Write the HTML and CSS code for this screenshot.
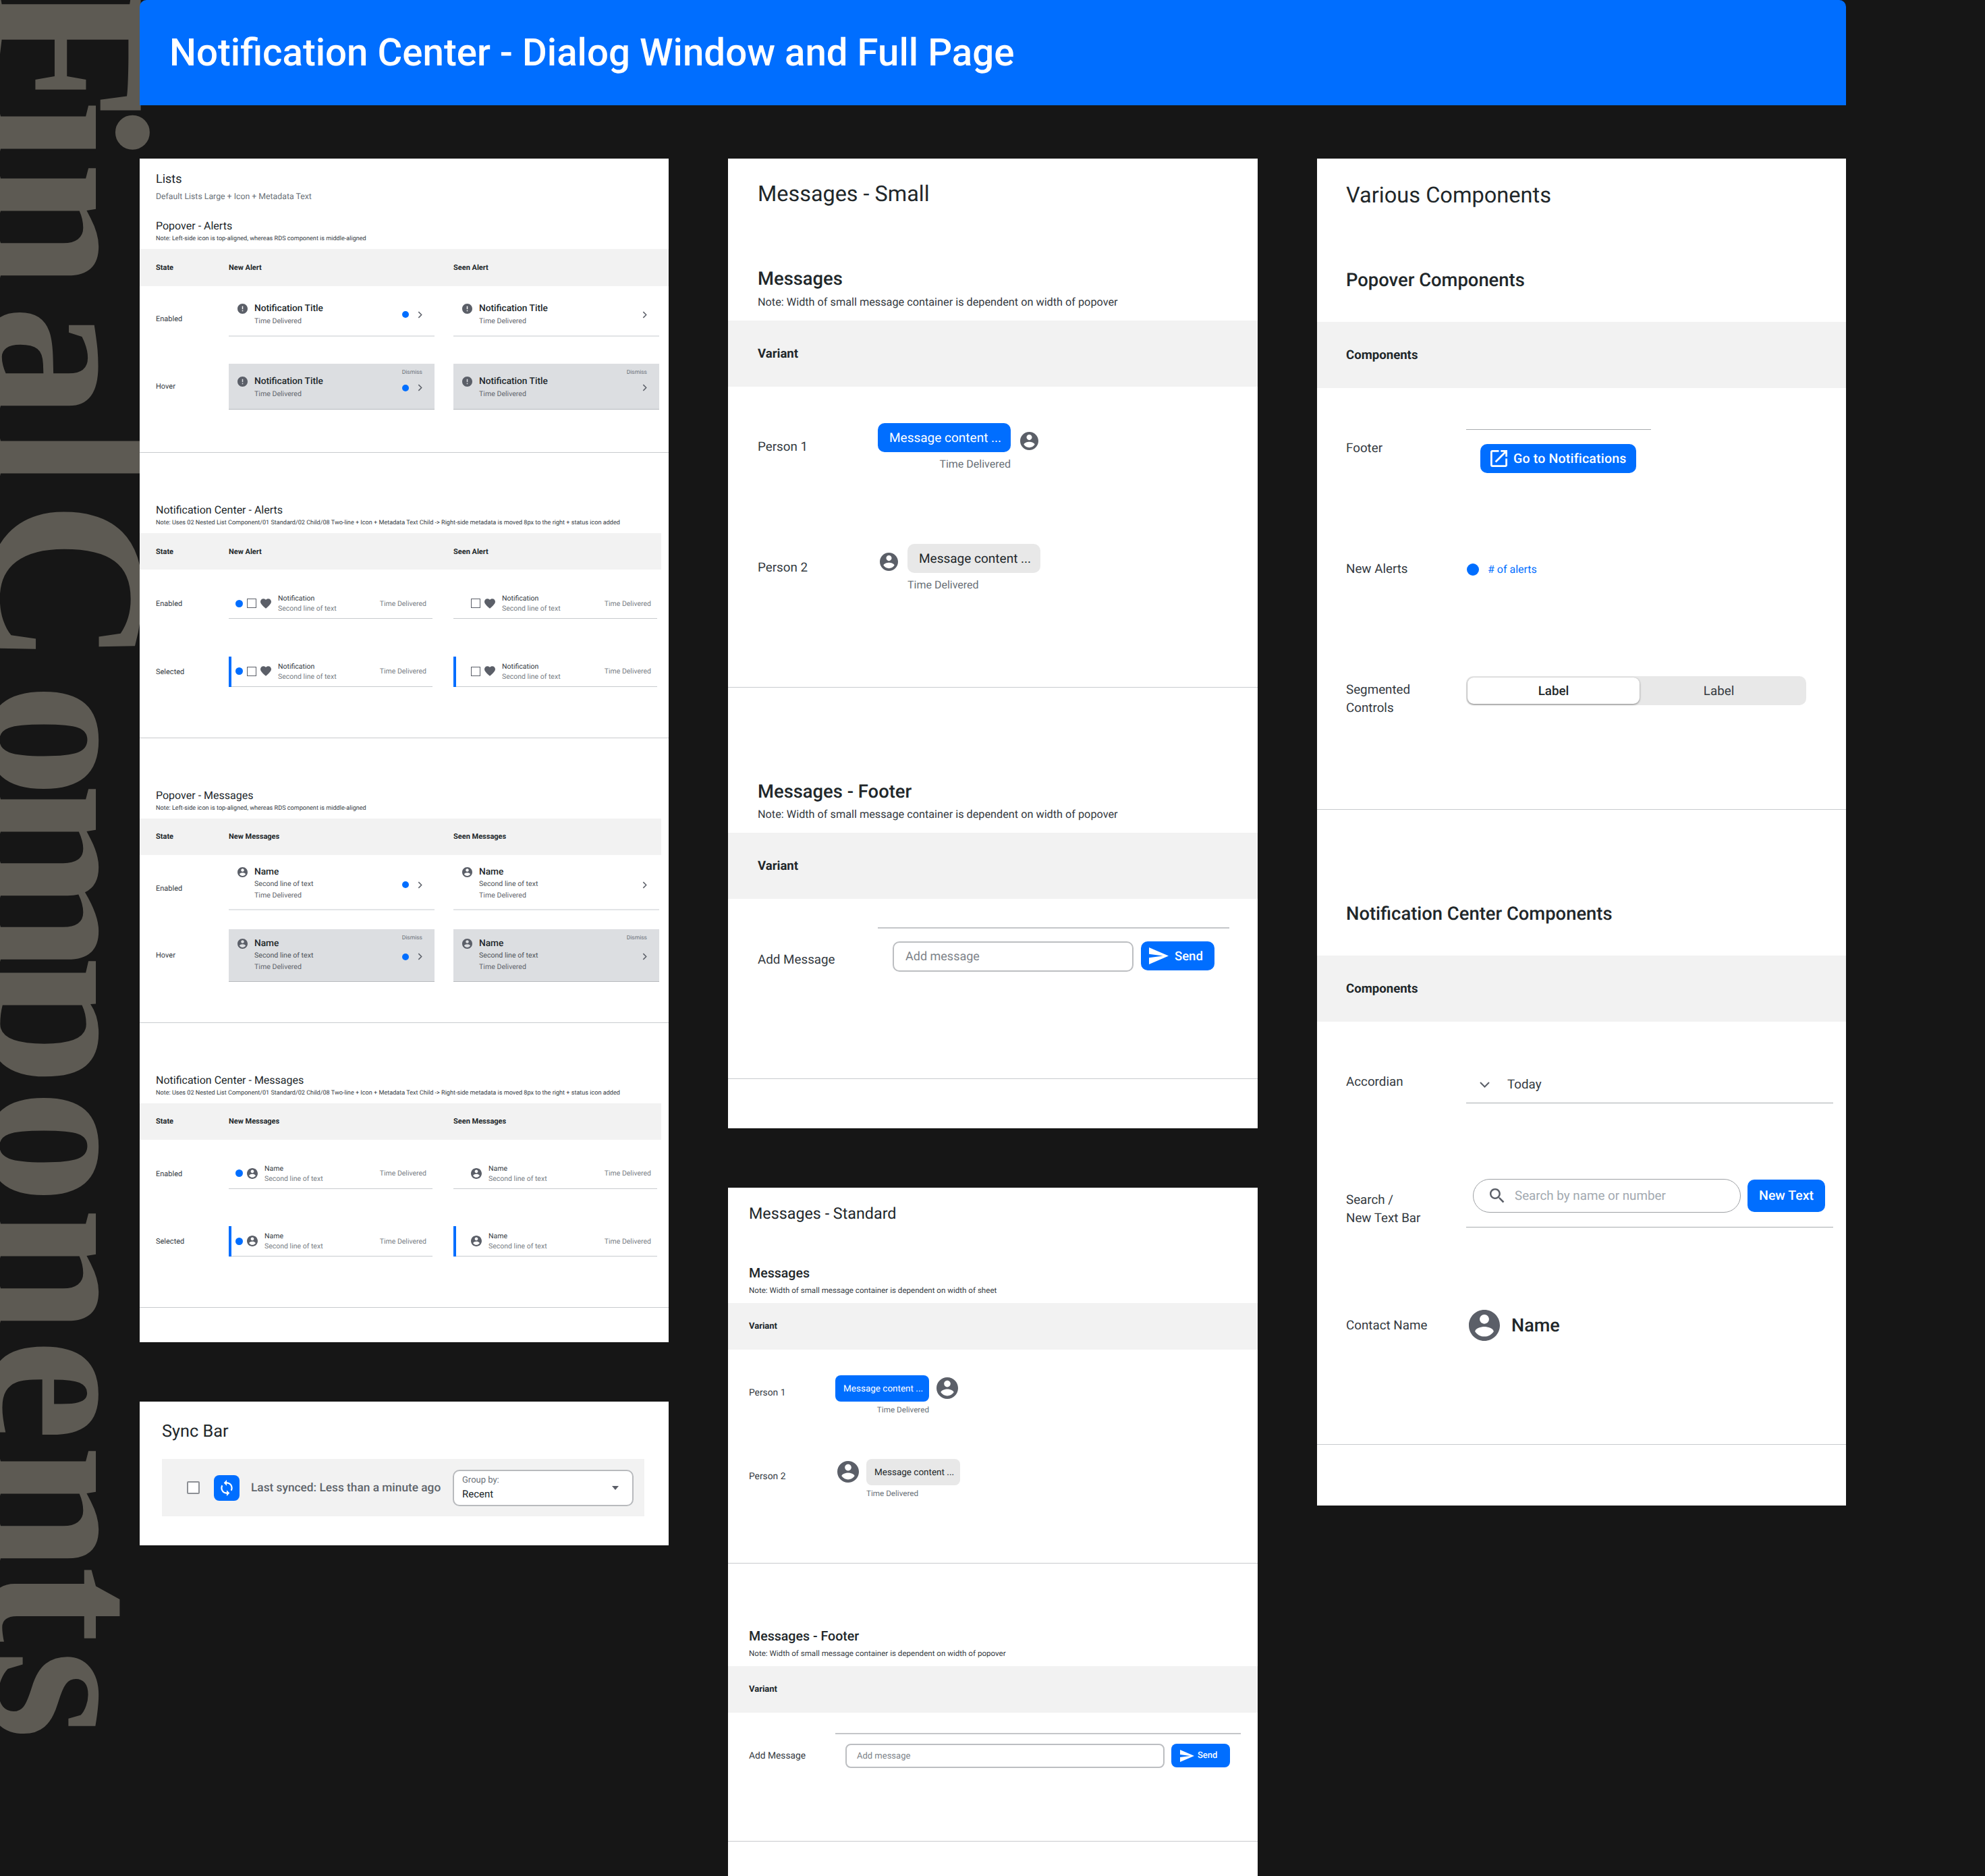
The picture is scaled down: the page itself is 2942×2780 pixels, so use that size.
FILE: index.html
```html
<!DOCTYPE html>
<html lang="en">
<head>
    <meta charset="UTF-8">
    <title>Notification Center - Dialog Window and Full Page</title>
    <link rel="stylesheet" href="styles.css">
</head>
<body>
<svg class="sprite" width="0" height="0">
    <symbol id="i-person" viewBox="2 2 20 20"><path d="M12 2C6.48 2 2 6.48 2 12s4.48 10 10 10 10-4.48 10-10S17.52 2 12 2zm0 3c1.66 0 3 1.34 3 3s-1.34 3-3 3-3-1.34-3-3 1.34-3 3-3zm0 14.2c-2.5 0-4.71-1.28-6-3.22.03-1.99 4-3.08 6-3.08 1.99 0 5.97 1.09 6 3.08-1.29 1.94-3.5 3.22-6 3.22z"/></symbol>
    <symbol id="i-alert" viewBox="2 2 20 20"><path d="M12 2C6.48 2 2 6.48 2 12s4.48 10 10 10 10-4.48 10-10S17.52 2 12 2zm1 15h-2v-2h2v2zm0-4h-2V7h2v6z"/></symbol>
    <symbol id="i-heart" viewBox="2 3 20 18.4"><path d="M12 21.35l-1.45-1.32C5.4 15.36 2 12.28 2 8.5 2 5.42 4.42 3 7.5 3c1.74 0 3.41.81 4.5 2.09C13.09 3.81 14.76 3 16.5 3 19.58 3 22 5.42 22 8.5c0 3.78-3.4 6.86-8.55 11.54L12 21.35z"/></symbol>
    <symbol id="i-chevron" viewBox="0 0 8 12"><path d="M1.5 1l5 5-5 5" fill="none" stroke="currentColor" stroke-width="1.7"/></symbol>
    <symbol id="i-chevron-down" viewBox="0 0 15 9"><path d="M1 1l6.5 6.5L14 1" fill="none" stroke="currentColor" stroke-width="2"/></symbol>
    <symbol id="i-sync" viewBox="0 0 24 24"><path d="M12 4V1L8 5l4 4V6c3.31 0 6 2.69 6 6 0 1.01-.25 1.97-.7 2.8l1.46 1.46C19.54 15.03 20 13.57 20 12c0-4.42-3.58-8-8-8zm0 14c-3.31 0-6-2.69-6-6 0-1.01.25-1.97.7-2.8L5.24 7.74C4.46 8.97 4 10.43 4 12c0 4.42 3.58 8 8 8v3l4-4-4-4v3z"/></symbol>
    <symbol id="i-send" viewBox="2 3 21 18"><path d="M2.01 21L23 12 2.01 3 2 10l15 2-15 2z"/></symbol>
    <symbol id="i-open" viewBox="3 3 18 18"><path d="M19 19H5V5h7V3H5c-1.11 0-2 .9-2 2v14c0 1.1.89 2 2 2h14c1.1 0 2-.9 2-2v-7h-2v7zM14 3v2h3.59l-9.83 9.83 1.41 1.41L19 6.41V10h2V3h-7z"/></symbol>
    <symbol id="i-search" viewBox="3 3 18 18"><path d="M15.5 14h-.79l-.28-.27C15.41 12.59 16 11.11 16 9.5 16 5.91 13.09 3 9.5 3S3 5.91 3 9.5 5.91 16 9.5 16c1.61 0 3.09-.59 4.23-1.57l.27.28v.79l5 4.99L20.49 19l-4.99-5zm-6 0C7.01 14 5 11.99 5 9.5S7.01 5 9.5 5 14 7.01 14 9.5 11.99 14 9.5 14z"/></symbol>
</svg>

<!-- big letters running down the left edge -->
<svg class="bg-word" width="260" height="2780">
    <text transform="translate(-14 0) rotate(90)" x="-28 148 240 452 630 700 742 1012 1160 1420 1614 1789 1984 2141 2321 2445">Final Components</text>
</svg>

<div class="board">
    <header class="banner">
        <h1>Notification Center - Dialog Window and Full Page</h1>
    </header>

    <div class="columns">
        <div class="col">
            <div class="panel">
                <section class="sec lists-first">
                    <h2 class="lists-title">Lists</h2>
                    <p class="lists-sub">Default Lists Large + Icon + Metadata Text</p>
                    <h3 class="mini-h">Popover - Alerts</h3>
                    <p class="mini-note">Note: Left-side icon is top-aligned, whereas RDS component is middle-aligned</p>
                    <div class="mini-head full">
                        <span class="state">State</span><span class="cell-w">New Alert</span><span class="cell-w">Seen Alert</span>
                    </div>
                    <div class="mini-rows rows-alert">
                        <div class="mini-row">
                            <span class="state low">Enabled</span>
                            <div class="item item-alert">
                                <svg class="ico"><use href="#i-alert"/></svg>
                                <div class="item-text"><div class="item-title">Notification Title</div><div class="item-time">Time Delivered</div></div>
                                <div class="item-end"><i class="dot"></i><svg class="chev"><use href="#i-chevron"/></svg></div>
                            </div>
                            <div class="item item-alert">
                                <svg class="ico"><use href="#i-alert"/></svg>
                                <div class="item-text"><div class="item-title">Notification Title</div><div class="item-time">Time Delivered</div></div>
                                <div class="item-end"><svg class="chev"><use href="#i-chevron"/></svg></div>
                            </div>
                        </div>
                        <div class="mini-row">
                            <span class="state">Hover</span>
                            <div class="item item-alert hover">
                                <svg class="ico"><use href="#i-alert"/></svg>
                                <div class="item-text"><div class="item-title">Notification Title</div><div class="item-time">Time Delivered</div></div>
                                <div class="item-end"><i class="dot"></i><svg class="chev"><use href="#i-chevron"/></svg></div>
                                <span class="dismiss">Dismiss</span>
                            </div>
                            <div class="item item-alert hover">
                                <svg class="ico"><use href="#i-alert"/></svg>
                                <div class="item-text"><div class="item-title">Notification Title</div><div class="item-time">Time Delivered</div></div>
                                <div class="item-end"><svg class="chev"><use href="#i-chevron"/></svg></div>
                                <span class="dismiss">Dismiss</span>
                            </div>
                        </div>
                    </div>
                </section>

                <section class="sec lists-next">
                    <h3 class="mini-h">Notification Center - Alerts</h3>
                    <p class="mini-note">Note: Uses 02 Nested List Component/01 Standard/02 Child/08 Two-line + Icon + Metadata Text Child -&gt; Right-side metadata is moved 8px to the right + status icon added</p>
                    <div class="mini-head">
                        <span class="state">State</span><span class="cell-w">New Alert</span><span class="cell-w">Seen Alert</span>
                    </div>
                    <div class="mini-rows rows-center">
                        <div class="mini-row">
                            <span class="state">Enabled</span>
                            <div class="nc">
                                <i class="dot"></i><b class="check"></b><svg class="heart"><use href="#i-heart"/></svg>
                                <div class="nc-text"><div class="nc-name">Notification</div><div class="nc-second">Second line of text</div></div>
                                <span class="nc-time">Time Delivered</span>
                            </div>
                            <div class="nc seen">
                                <b class="check"></b><svg class="heart"><use href="#i-heart"/></svg>
                                <div class="nc-text"><div class="nc-name">Notification</div><div class="nc-second">Second line of text</div></div>
                                <span class="nc-time">Time Delivered</span>
                            </div>
                        </div>
                        <div class="mini-row">
                            <span class="state">Selected</span>
                            <div class="nc selected">
                                <i class="dot"></i><b class="check"></b><svg class="heart"><use href="#i-heart"/></svg>
                                <div class="nc-text"><div class="nc-name">Notification</div><div class="nc-second">Second line of text</div></div>
                                <span class="nc-time">Time Delivered</span>
                            </div>
                            <div class="nc seen selected">
                                <b class="check"></b><svg class="heart"><use href="#i-heart"/></svg>
                                <div class="nc-text"><div class="nc-name">Notification</div><div class="nc-second">Second line of text</div></div>
                                <span class="nc-time">Time Delivered</span>
                            </div>
                        </div>
                    </div>
                </section>

                <section class="sec lists-next msgs">
                    <h3 class="mini-h">Popover - Messages</h3>
                    <p class="mini-note">Note: Left-side icon is top-aligned, whereas RDS component is middle-aligned</p>
                    <div class="mini-head">
                        <span class="state">State</span><span class="cell-w">New Messages</span><span class="cell-w">Seen Messages</span>
                    </div>
                    <div class="mini-rows rows-msg">
                        <div class="mini-row">
                            <span class="state low-more">Enabled</span>
                            <div class="item item-msg">
                                <svg class="ico"><use href="#i-person"/></svg>
                                <div class="item-text"><div class="item-title">Name</div><div class="item-second">Second line of text</div><div class="item-time">Time Delivered</div></div>
                                <div class="item-end"><i class="dot"></i><svg class="chev"><use href="#i-chevron"/></svg></div>
                            </div>
                            <div class="item item-msg">
                                <svg class="ico"><use href="#i-person"/></svg>
                                <div class="item-text"><div class="item-title">Name</div><div class="item-second">Second line of text</div><div class="item-time">Time Delivered</div></div>
                                <div class="item-end"><svg class="chev"><use href="#i-chevron"/></svg></div>
                            </div>
                        </div>
                        <div class="mini-row">
                            <span class="state">Hover</span>
                            <div class="item item-msg hover">
                                <svg class="ico"><use href="#i-person"/></svg>
                                <div class="item-text"><div class="item-title">Name</div><div class="item-second">Second line of text</div><div class="item-time">Time Delivered</div></div>
                                <div class="item-end"><i class="dot"></i><svg class="chev"><use href="#i-chevron"/></svg></div>
                                <span class="dismiss">Dismiss</span>
                            </div>
                            <div class="item item-msg hover">
                                <svg class="ico"><use href="#i-person"/></svg>
                                <div class="item-text"><div class="item-title">Name</div><div class="item-second">Second line of text</div><div class="item-time">Time Delivered</div></div>
                                <div class="item-end"><svg class="chev"><use href="#i-chevron"/></svg></div>
                                <span class="dismiss">Dismiss</span>
                            </div>
                        </div>
                    </div>
                </section>

                <section class="sec lists-next lists-last">
                    <h3 class="mini-h">Notification Center - Messages</h3>
                    <p class="mini-note">Note: Uses 02 Nested List Component/01 Standard/02 Child/08 Two-line + Icon + Metadata Text Child -&gt; Right-side metadata is moved 8px to the right + status icon added</p>
                    <div class="mini-head">
                        <span class="state">State</span><span class="cell-w">New Messages</span><span class="cell-w">Seen Messages</span>
                    </div>
                    <div class="mini-rows rows-center">
                        <div class="mini-row">
                            <span class="state">Enabled</span>
                            <div class="nc">
                                <i class="dot"></i><svg class="nc-person"><use href="#i-person"/></svg>
                                <div class="nc-text"><div class="nc-name">Name</div><div class="nc-second">Second line of text</div></div>
                                <span class="nc-time">Time Delivered</span>
                            </div>
                            <div class="nc seen">
                                <svg class="nc-person"><use href="#i-person"/></svg>
                                <div class="nc-text"><div class="nc-name">Name</div><div class="nc-second">Second line of text</div></div>
                                <span class="nc-time">Time Delivered</span>
                            </div>
                        </div>
                        <div class="mini-row">
                            <span class="state">Selected</span>
                            <div class="nc selected">
                                <i class="dot"></i><svg class="nc-person"><use href="#i-person"/></svg>
                                <div class="nc-text"><div class="nc-name">Name</div><div class="nc-second">Second line of text</div></div>
                                <span class="nc-time">Time Delivered</span>
                            </div>
                            <div class="nc seen selected">
                                <svg class="nc-person"><use href="#i-person"/></svg>
                                <div class="nc-text"><div class="nc-name">Name</div><div class="nc-second">Second line of text</div></div>
                                <span class="nc-time">Time Delivered</span>
                            </div>
                        </div>
                    </div>
                </section>
                <div class="lists-end"></div>
            </div>

            <div class="panel sync-panel">
                <h2 class="sync-title">Sync Bar</h2>
                <div class="sync-bar">
                    <b class="sync-check"></b>
                    <span class="sync-btn"><svg><use href="#i-sync"/></svg></span>
                    <span class="sync-text">Last synced: Less than a minute ago</span>
                    <div class="sync-select">
                        <div>
                            <div class="sync-select-label">Group by:</div>
                            <div class="sync-select-value">Recent</div>
                        </div>
                        <i class="caret"></i>
                    </div>
                </div>
            </div>
        </div>

        <div class="col col-mid">
            <div class="panel big">
                <section class="sec big-first">
                    <h2 class="big-title">Messages - Small</h2>
                    <h3 class="big-h">Messages</h3>
                    <p class="big-note">Note: Width of small message container is dependent on width of popover</p>
                    <div class="big-head">Variant</div>
                    <div class="msg-rows">
                        <div class="msg-row">
                            <span class="msg-label">Person 1</span>
                            <div class="msg mine">
                                <span class="bubble">Message content ...</span>
                                <svg class="avatar"><use href="#i-person"/></svg>
                                <span class="msg-time">Time Delivered</span>
                            </div>
                        </div>
                        <div class="msg-row">
                            <span class="msg-label">Person 2</span>
                            <div class="msg theirs">
                                <svg class="avatar"><use href="#i-person"/></svg>
                                <span class="bubble">Message content ...</span>
                                <span class="msg-time">Time Delivered</span>
                            </div>
                        </div>
                    </div>
                </section>
                <section class="sec big-footer">
                    <h3 class="big-h">Messages - Footer</h3>
                    <p class="big-note">Note: Width of small message container is dependent on width of popover</p>
                    <div class="big-head">Variant</div>
                    <div class="msg-row add-row">
                        <span class="msg-label">Add Message</span>
                        <div class="composer">
                            <span class="composer-input">Add message</span>
                            <span class="composer-send"><svg><use href="#i-send"/></svg>Send</span>
                        </div>
                    </div>
                </section>
                <div class="big-end"></div>
            </div>

            <div class="panel std">
                <section class="sec big-first">
                    <h2 class="big-title">Messages - Standard</h2>
                    <h3 class="big-h">Messages</h3>
                    <p class="big-note">Note: Width of small message container is dependent on width of sheet</p>
                    <div class="big-head">Variant</div>
                    <div class="msg-rows">
                        <div class="msg-row">
                            <span class="msg-label">Person 1</span>
                            <div class="msg mine">
                                <span class="bubble">Message content ...</span>
                                <svg class="avatar"><use href="#i-person"/></svg>
                                <span class="msg-time">Time Delivered</span>
                            </div>
                        </div>
                        <div class="msg-row">
                            <span class="msg-label">Person 2</span>
                            <div class="msg theirs">
                                <svg class="avatar"><use href="#i-person"/></svg>
                                <span class="bubble">Message content ...</span>
                                <span class="msg-time">Time Delivered</span>
                            </div>
                        </div>
                    </div>
                </section>
                <section class="sec big-footer">
                    <h3 class="big-h">Messages - Footer</h3>
                    <p class="big-note">Note: Width of small message container is dependent on width of popover</p>
                    <div class="big-head">Variant</div>
                    <div class="msg-row add-row">
                        <span class="msg-label">Add Message</span>
                        <div class="composer">
                            <span class="composer-input">Add message</span>
                            <span class="composer-send"><svg><use href="#i-send"/></svg>Send</span>
                        </div>
                    </div>
                </section>
            </div>
        </div>

        <div class="col">
            <div class="panel comps">
                <section class="sec comps-first">
                    <h2 class="big-title">Various Components</h2>
                    <h3 class="big-h">Popover Components</h3>
                    <div class="big-head">Components</div>
                    <div class="comp-row footer-row">
                        <span class="comp-label">Footer</span>
                        <div class="footer-box">
                            <span class="btn btn-wide"><svg><use href="#i-open"/></svg>Go to Notifications</span>
                        </div>
                    </div>
                    <div class="comp-row alerts-row">
                        <span class="comp-label">New Alerts</span>
                        <div class="alerts-count"><i class="dot"></i>#&nbsp;of alerts</div>
                    </div>
                    <div class="comp-row seg-row">
                        <span class="comp-label">Segmented<br>Controls</span>
                        <div class="seg"><span class="seg-on">Label</span><span>Label</span></div>
                    </div>
                </section>
                <section class="sec comps-next">
                    <h3 class="big-h">Notification Center Components</h3>
                    <div class="big-head">Components</div>
                    <div class="comp-row accordion-row">
                        <span class="comp-label">Accordian</span>
                        <div class="accordion"><svg><use href="#i-chevron-down"/></svg>Today</div>
                    </div>
                    <div class="comp-row search-row">
                        <span class="comp-label">Search /<br>New Text Bar</span>
                        <div class="search-box">
                            <span class="search-pill"><svg><use href="#i-search"/></svg>Search by name or number</span>
                            <span class="btn btn-new">New Text</span>
                        </div>
                    </div>
                    <div class="comp-row contact-row">
                        <span class="comp-label">Contact Name</span>
                        <div class="contact"><svg><use href="#i-person"/></svg>Name</div>
                    </div>
                </section>
                <div class="comps-end"></div>
            </div>
        </div>
    </div>
</div>
</body>
</html>
```

FILE: styles.css
```css
*{
    box-sizing: border-box;
}
html{
    background: #161616;
}
body{
    position: relative;
    margin: 0;
    width: 2942px;
    height: 2780px;
    overflow: hidden;
    font-family: Roboto, "Liberation Sans", sans-serif;
    color: #21272a;
    text-rendering: geometricPrecision;
}
h1,h2,h3,p{
    margin: 0;
}
i,b{
    display: block;
    flex: none;
}
svg{
    display: block;
    flex: none;
}
.sprite{
    position: absolute;
}

/* letters behind everything */
.bg-word{
    position: absolute;
    left: 0;
    top: 0;
    z-index: -1;
}
.bg-word text{
    font-family: "Liberation Serif", serif;
    font-size: 340px;
    font-weight: 700;
    fill: #5d5a53;
}

.board{
    display: flex;
    flex-direction: column;
    gap: 79px;
    width: 2736px;
    padding-left: 207px;
}
.banner{
    display: flex;
    align-items: center;
    height: 156px;
    padding-left: 44px;
    background: #006eff;
    border-radius: 10px 10px 0 0;
}
.banner h1{
    font-size: 56.4px;
    font-weight: 500;
    color: #fff;
}
.columns{
    display: flex;
    align-items: flex-start;
    gap: 88px;
}
.col{
    display: flex;
    flex-direction: column;
    gap: 88px;
    width: 784px;
}
.col-mid{
    width: 785px;
}
.panel{
    background: #fff;
}
.sec{
    border-bottom: 1px solid #c8cbce;
}

/* left panel, small tables */
.lists-first{
    padding-top: 19px;
}
.lists-title{
    padding-left: 24px;
    font-size: 18px;
    font-weight: 400;
    line-height: 24px;
}
.lists-sub{
    margin: 6px 0 24.5px;
    padding-left: 24px;
    font-size: 12.3px;
    line-height: 16px;
    color: #697077;
}
.lists-next{
    padding-top: 75px;
}
.lists-end{
    height: 51px;
}
.mini-h{
    padding-left: 24px;
    font-size: 16px;
    font-weight: 400;
    line-height: 20px;
}
.mini-note{
    margin-top: 2px;
    padding-left: 24px;
    font-size: 9.1px;
    line-height: 14px;
    color: #343a3f;
}
.mini-head{
    display: flex;
    gap: 28px;
    align-items: center;
    width: 773px;
    height: 54px;
    margin-top: 8px;
    padding-left: 24px;
    background: #f2f2f2;
    font-size: 11px;
    font-weight: 700;
}
.mini-head.full{
    width: 100%;
    height: 55px;
}
.mini-head .state{
    color: #21272a;
}
.state{
    flex: none;
    width: 80px;
    font-size: 11px;
    color: #343a3f;
}
.cell-w{
    width: 305px;
}
.mini-rows{
    display: flex;
    flex-direction: column;
}
.rows-alert{
    gap: 40px;
    padding: 7px 0 63.5px;
}
.rows-center{
    gap: 55.5px;
    padding: 28px 0 75px;
}
.rows-msg{
    gap: 28px;
    padding: 4px 0 60px;
}
.mini-row{
    display: flex;
    align-items: center;
    gap: 28px;
    padding-left: 24px;
}
.low{
    margin-top: 16px;
}
.low-more{
    margin-top: 14px;
}

/* popover items */
.item{
    position: relative;
    display: flex;
    flex: none;
    width: 305px;
    padding-left: 13px;
    border-bottom: 2px solid #e2e4e6;
}
.item-alert{
    height: 68px;
    padding-top: 16px;
}
.item-msg{
    height: 78px;
    padding-top: 11px;
}
.item.hover{
    background: #dcdee1;
    border-bottom: 1px solid #b6b9bd;
}
.ico{
    width: 15px;
    height: 15px;
    margin: 3px 10px 0 0;
    fill: #5b5f68;
}
.item-title{
    font-size: 13.7px;
    font-weight: 500;
    line-height: 20px;
}
.item-second{
    margin-top: 1px;
    font-size: 10.6px;
    line-height: 14px;
    color: #4d5358;
}
.item-time{
    margin-top: 1px;
    font-size: 10.6px;
    line-height: 16px;
    color: #5f656c;
}
.item-msg .item-time{
    margin-top: 2px;
}
.item-end{
    position: absolute;
    top: 0;
    right: 18px;
    bottom: 0;
    display: flex;
    align-items: center;
    gap: 13px;
    padding-top: 5px;
}
.dot{
    width: 10px;
    height: 10px;
    border-radius: 50%;
    background: #006eff;
}
.chev{
    width: 7px;
    height: 11px;
    color: #5b5f68;
}
.dismiss{
    position: absolute;
    top: 7px;
    right: 18px;
    font-size: 8.5px;
    line-height: 13px;
    color: #697077;
}

/* notification center rows */
.nc{
    position: relative;
    display: flex;
    flex: none;
    align-items: center;
    width: 302px;
    height: 45px;
    margin-right: 3px;
    padding: 0 9px 0 10px;
    border-bottom: 1px solid #c8cbce;
}
.nc.seen{
    padding-left: 26px;
}
.nc.selected::before{
    content: "";
    position: absolute;
    left: 0;
    top: 0;
    bottom: -1px;
    width: 4px;
    background: #006eff;
}
.nc .dot{
    width: 11px;
    height: 11px;
    margin-right: 6px;
}
.check{
    width: 14px;
    height: 14px;
    margin-right: 6px;
    border: 1.5px solid #5b5f68;
}
.heart{
    width: 16px;
    height: 15px;
    margin-right: 10px;
    fill: #5b5f68;
}
.nc-person{
    width: 16px;
    height: 16px;
    margin-right: 10px;
    fill: #5b5f68;
}
.nc-name{
    font-size: 10.5px;
    line-height: 15px;
    color: #343a3f;
}
.nc-second{
    font-size: 10.5px;
    line-height: 15px;
    color: #787e85;
}
.nc-time{
    margin-left: auto;
    font-size: 10.5px;
    color: #787e85;
}

/* sync bar */
.sync-panel{
    height: 213px;
    padding: 29px 36px 0 33px;
}
.sync-title{
    font-size: 25.3px;
    font-weight: 400;
    line-height: 32px;
}
.sync-bar{
    display: flex;
    align-items: center;
    height: 85px;
    margin-top: 24px;
    padding-left: 37px;
    background: #f2f2f2;
}
.sync-check{
    width: 19px;
    height: 19px;
    margin-right: 21px;
    border: 2px solid #8d9095;
    border-radius: 2px;
    background: #fff;
}
.sync-btn{
    display: flex;
    align-items: center;
    justify-content: center;
    width: 38px;
    height: 38px;
    border-radius: 8px;
    background: #006eff;
}
.sync-btn svg{
    width: 26px;
    height: 26px;
    fill: #fff;
}
.sync-text{
    width: 316px;
    padding-left: 17px;
    font-size: 17.3px;
    font-weight: 500;
    color: #5f656c;
}
.sync-select{
    display: flex;
    align-items: center;
    justify-content: space-between;
    width: 268px;
    height: 54px;
    padding: 0 20px 0 12px;
    border: 2px solid #b8babd;
    border-radius: 10px;
    background: #fff;
}
.sync-select-label{
    font-size: 13px;
    line-height: 18px;
    color: #697077;
}
.sync-select-value{
    font-size: 15px;
    line-height: 22px;
}
.caret{
    border-top: 6px solid #5b5f68;
    border-left: 5px solid transparent;
    border-right: 5px solid transparent;
}

/* middle panels */
.big-first{
    padding-top: 32px;
}
.big-title{
    padding-left: 44px;
    font-size: 32.4px;
    font-weight: 400;
    line-height: 40px;
}
.big-h{
    margin-top: 88px;
    padding-left: 44px;
    font-size: 27.4px;
    font-weight: 500;
    line-height: 36px;
}
.big-note{
    margin-top: 5px;
    padding-left: 44px;
    font-size: 16.25px;
    line-height: 24px;
    color: #343a3f;
}
.big-head{
    display: flex;
    align-items: center;
    height: 98px;
    margin-top: 15px;
    padding-left: 44px;
    background: #f2f2f2;
    font-size: 18.6px;
    font-weight: 700;
}
.msg-rows{
    display: flex;
    flex-direction: column;
    gap: 108px;
    padding: 54px 0 141px;
}
.msg-row{
    display: flex;
    padding-left: 44px;
}
.msg-label{
    flex: none;
    width: 178px;
    padding-top: 23px;
    font-size: 18.8px;
    line-height: 24px;
    color: #343a3f;
}
.msg{
    display: grid;
    align-items: start;
}
.mine{
    grid-template-columns: 197px auto;
    column-gap: 14px;
}
.theirs{
    grid-template-columns: auto 197px;
    column-gap: 14px;
    padding-left: 3px;
}
.bubble{
    display: flex;
    align-items: center;
    height: 43px;
    padding-left: 17px;
    border-radius: 10px;
    font-size: 19px;
}
.mine .bubble{
    background: #006eff;
    color: #fff;
}
.theirs .bubble{
    background: #e8e8e8;
}
.avatar{
    width: 27px;
    height: 27px;
    margin-top: 13px;
    fill: #5b5f68;
}
.msg-time{
    margin-top: 8px;
    font-size: 16px;
    line-height: 20px;
    color: #697077;
}
.mine .msg-time{
    grid-column: 1;
    text-align: right;
}
.theirs .msg-time{
    grid-column: 2;
}
.big-footer .big-h{
    margin-top: 136px;
}
.big-footer .big-note{
    margin-top: 4px;
}
.add-row{
    margin-top: 42px;
    padding-bottom: 158px;
}
.add-row .msg-label{
    padding-top: 36px;
}
.composer{
    display: flex;
    align-items: flex-start;
    width: 521px;
    padding: 19px 0 0 22px;
    border-top: 2px solid #c4c6c9;
}
.composer-input{
    display: flex;
    align-items: center;
    flex: none;
    width: 357px;
    height: 45px;
    margin-right: 11px;
    padding-left: 17px;
    border: 2px solid #bcbec1;
    border-radius: 10px;
    font-size: 18px;
    color: #7d8389;
}
.composer-send{
    display: flex;
    align-items: center;
    flex: none;
    width: 109px;
    height: 43px;
    padding-left: 12px;
    border-radius: 10px;
    background: #006eff;
    font-size: 18.5px;
    font-weight: 500;
    color: #fff;
}
.composer-send svg{
    width: 29px;
    height: 25px;
    margin-right: 9px;
    fill: #fff;
}
.big-end{
    height: 73px;
}

/* standard variant is the same parts, smaller */
.std{
    height: 1021px;
}
.std .big-first{
    padding-top: 22px;
}
.std .big-title{
    padding-left: 31px;
    font-size: 23.3px;
    line-height: 32px;
}
.std .big-h{
    margin-top: 60px;
    padding-left: 31px;
    font-size: 19.6px;
    line-height: 26px;
}
.std .big-note{
    margin-top: 4px;
    padding-left: 31px;
    font-size: 11.6px;
    line-height: 16px;
}
.std .big-head{
    height: 69px;
    margin-top: 11px;
    padding-left: 31px;
    font-size: 13px;
}
.std .msg-rows{
    gap: 65px;
    padding: 38px 0 95px;
}
.std .msg-row{
    padding-left: 31px;
}
.std .msg-label{
    width: 128px;
    padding-top: 17px;
    font-size: 13.8px;
    line-height: 18px;
}
.std .mine{
    grid-template-columns: 139px auto;
    column-gap: 11px;
}
.std .theirs{
    grid-template-columns: auto 139px;
    column-gap: 11px;
}
.std .bubble{
    height: 39px;
    padding-left: 12px;
    border-radius: 8px;
    font-size: 13.5px;
}
.std .avatar{
    width: 32px;
    height: 32px;
    margin-top: 3px;
}
.std .msg-time{
    margin-top: 4px;
    font-size: 11.7px;
    line-height: 16px;
}
.std .big-footer .big-h{
    margin-top: 95px;
}
.std .add-row{
    margin-top: 30px;
    padding-bottom: 108px;
}
.std .add-row .msg-label{
    padding-top: 25px;
}
.std .composer{
    width: 601px;
    padding: 14px 0 0 15px;
}
.std .composer-input{
    width: 473px;
    height: 36px;
    margin-right: 10px;
    padding-left: 15px;
    border-radius: 8px;
    font-size: 13px;
}
.std .composer-send{
    width: 87px;
    height: 35px;
    padding-left: 13px;
    border-radius: 8px;
    font-size: 13px;
}
.std .composer-send svg{
    width: 21px;
    height: 18px;
    margin-right: 5px;
}

/* right panel */
.comps-first{
    padding-top: 34px;
}
.comps .big-title,
.comps .big-h,
.comps .big-head{
    padding-left: 43px;
}
.comps .big-title{
    font-size: 32.6px;
}
.comps .big-h{
    margin-top: 88px;
}
.comps .big-head{
    margin-top: 44px;
}
.comp-row{
    display: flex;
    padding-left: 43px;
}
.comp-label{
    flex: none;
    width: 178px;
    font-size: 18.8px;
    line-height: 27px;
    color: #343a3f;
}
.footer-row{
    margin-top: 61px;
}
.footer-row .comp-label{
    padding-top: 15px;
}
.footer-box{
    width: 274px;
    padding: 21px 0 0 21px;
    border-top: 1px solid #a8abae;
}
.btn{
    display: flex;
    align-items: center;
    height: 43px;
    border-radius: 10px;
    background: #006eff;
    font-size: 19.5px;
    font-weight: 500;
    color: #fff;
}
.btn-wide{
    width: 231px;
    padding-left: 15px;
    letter-spacing: .2px;
}
.btn-wide svg{
    width: 25px;
    height: 25px;
    margin-right: 9px;
    fill: #fff;
}
.alerts-row{
    margin-top: 129px;
    align-items: center;
}
.alerts-count{
    display: flex;
    align-items: center;
    padding-left: 1px;
    font-size: 16px;
    color: #006eff;
}
.alerts-count .dot{
    width: 18px;
    height: 18px;
    margin-right: 13px;
}
.seg-row{
    margin-top: 145px;
    padding-bottom: 136px;
}
.seg-row .comp-label{
    padding-top: 7px;
}
.seg{
    display: flex;
    width: 504px;
    height: 43px;
    padding: 2px 0 2px 2px;
    border-radius: 10px;
    background: #e8e8e8;
    font-size: 18.8px;
    color: #343a3f;
}
.seg span{
    display: flex;
    align-items: center;
    justify-content: center;
    width: 235px;
}
.seg .seg-on{
    width: 255px;
    border-radius: 9px;
    background: #fff;
    box-shadow: 0 1px 3px rgba(0,0,0,.45);
    font-weight: 500;
    color: #21272a;
}
.comps-next .big-h{
    margin-top: 136px;
}
.accordion-row{
    margin-top: 66px;
}
.accordion-row .comp-label{
    padding-top: 10px;
}
.accordion{
    display: flex;
    align-items: center;
    width: 544px;
    height: 55px;
    padding-left: 20px;
    border-bottom: 1px solid #a8abae;
    font-size: 18.8px;
    color: #343a3f;
}
.accordion svg{
    width: 15px;
    height: 9px;
    margin-right: 26px;
    color: #5b5f68;
}
.search-row{
    margin-top: 106px;
}
.search-row .comp-label{
    padding-top: 24px;
}
.search-box{
    display: flex;
    align-items: center;
    gap: 10px;
    width: 544px;
    padding: 0 0 16px 10px;
    border-bottom: 1px solid #a8abae;
}
.search-pill{
    display: flex;
    align-items: center;
    width: 397px;
    height: 50px;
    padding-left: 24px;
    border: 1.5px solid #9da0a4;
    border-radius: 25px;
    font-size: 18.8px;
    color: #a2a9b0;
}
.search-pill svg{
    width: 22px;
    height: 22px;
    margin-right: 15px;
    fill: #5b5f68;
}
.btn-new{
    justify-content: center;
    width: 115px;
    height: 48px;
}
.contact-row{
    margin-top: 122px;
    align-items: center;
    padding-bottom: 153px;
}
.contact{
    display: flex;
    align-items: center;
    padding-left: 4px;
    font-size: 27px;
    font-weight: 500;
}
.contact svg{
    width: 46px;
    height: 46px;
    margin-right: 17px;
    fill: #5b5f68;
}
.comps-end{
    height: 90px;
}
```
